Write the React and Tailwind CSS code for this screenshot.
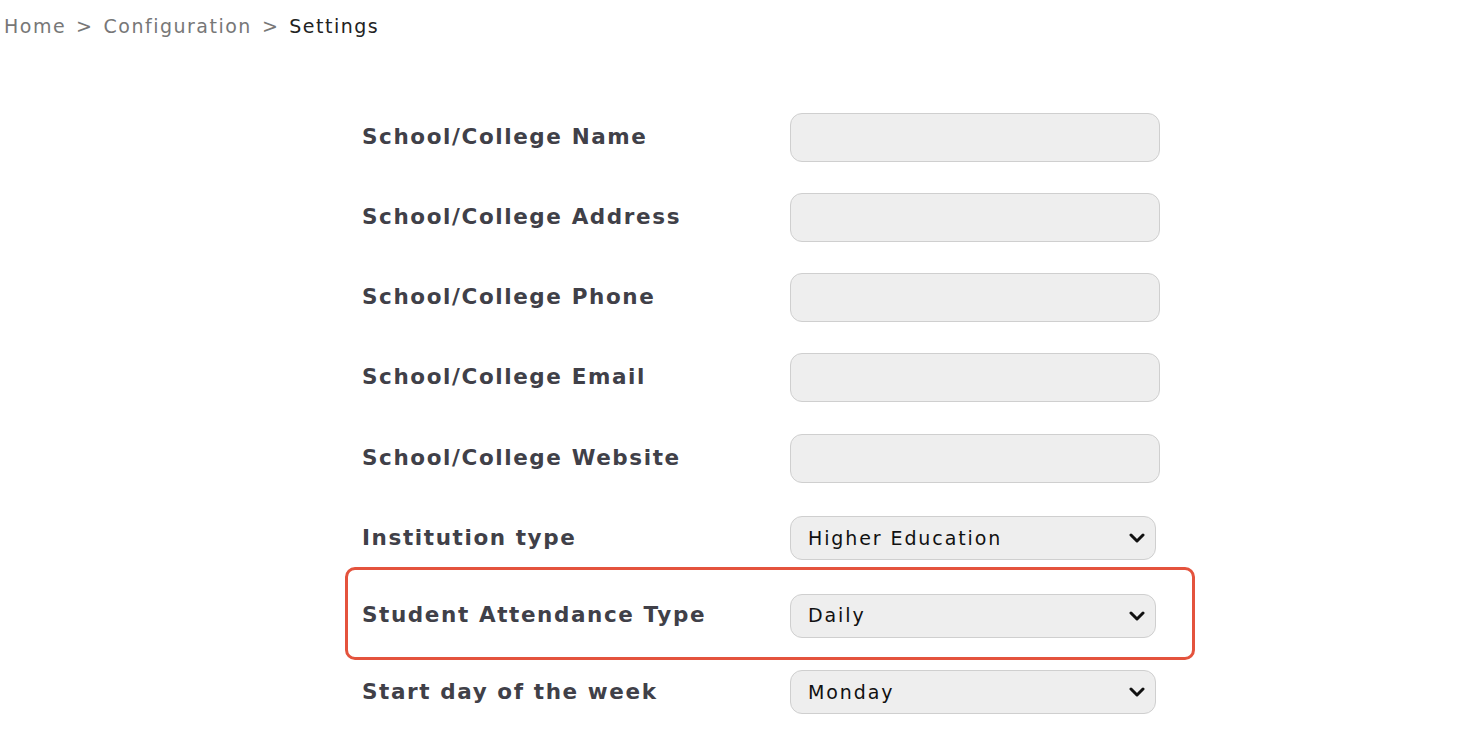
import React, { useState } from "react";

const textFields = [
  { label: "School/College Name", h: "h-[80px]" },
  { label: "School/College Address", h: "h-[80px]" },
  { label: "School/College Phone", h: "h-[80px]" },
  { label: "School/College Email", h: "h-[81px]" },
  { label: "School/College Website", h: "h-[81px]" },
];

const Chevron = () => (
  <svg
    width="16"
    height="10"
    viewBox="0 0 16 10"
    className="pointer-events-none absolute right-[11px] top-1/2 -translate-y-1/2"
  >
    <path d="M2 2 L8 8 L14 2" fill="none" stroke="#111" strokeWidth="3" strokeLinecap="round" strokeLinejoin="round" />
  </svg>
);

const SelectBox = ({ value, options, onChange }) => (
  <div className="relative w-[366px]">
    <select
      value={value}
      onChange={(e) => onChange(e.target.value)}
      className="h-[44px] w-full appearance-none rounded-[12px] border border-[#cfcfcf] bg-[#eeeeee] pl-[17px] pr-10 text-[19px] tracking-[1.9px] text-[#111] outline-none [font-family:'DejaVu_Sans',Verdana,sans-serif]"
    >
      {options.map((o) => (
        <option key={o}>{o}</option>
      ))}
    </select>
    <Chevron />
  </div>
);

const Label = ({ children }) => (
  <div className="w-[428px] text-[21.5px] font-bold tracking-[1.6px] text-[#404048] [font-family:'DejaVu_Sans',Verdana,sans-serif]">
    {children}
  </div>
);

export default function App() {
  const [institution, setInstitution] = useState("Higher Education");
  const [attendance, setAttendance] = useState("Daily");
  const [startDay, setStartDay] = useState("Monday");

  return (
    <div className="min-h-screen bg-white">
      <div className="flex h-[52px] items-center gap-[10px] pl-[4px] text-[19px] tracking-[1.5px] [font-family:'DejaVu_Sans',Verdana,sans-serif]">
        <span className="text-[#777]">Home</span>
        <span className="text-[#777]">&gt;</span>
        <span className="text-[#777]">Configuration</span>
        <span className="text-[#777]">&gt;</span>
        <span className="text-[#222]">Settings</span>
      </div>

      <div className="ml-[362px] mt-[45px] w-[800px]">
        {textFields.map((f) => (
          <div key={f.label} className={`flex items-center ${f.h}`}>
            <Label>{f.label}</Label>
            <input
              type="text"
              className="h-[49px] w-[370px] rounded-[12px] border border-[#cfcfcf] bg-[#eeeeee] px-4 text-[19px] outline-none"
            />
          </div>
        ))}

        <div className="flex h-[78px] items-center">
          <Label>Institution type</Label>
          <SelectBox
            value={institution}
            onChange={setInstitution}
            options={["Higher Education", "School", "College"]}
          />
        </div>

        <div className="relative flex h-[77px] items-center">
          <div className="pointer-events-none absolute -left-[17px] -right-[33px] -top-[10px] -bottom-[6px] rounded-[10px] border-[3px] border-[#e4533d]" />
          <Label>Student Attendance Type</Label>
          <SelectBox
            value={attendance}
            onChange={setAttendance}
            options={["Daily", "Period Wise"]}
          />
        </div>

        <div className="flex h-[76px] items-center">
          <Label>Start day of the week</Label>
          <SelectBox
            value={startDay}
            onChange={setStartDay}
            options={["Monday", "Sunday", "Saturday"]}
          />
        </div>
      </div>
    </div>
  );
}
